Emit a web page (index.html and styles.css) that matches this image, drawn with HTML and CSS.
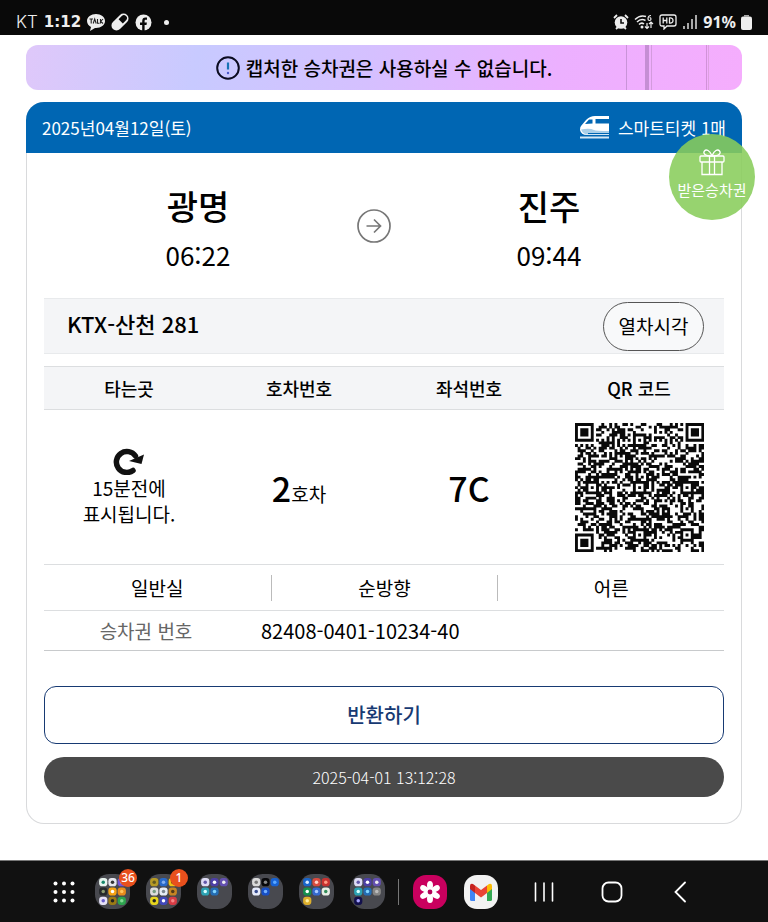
FILE: index.html
```html
<!DOCTYPE html>
<html lang="ko">
<head>
<meta charset="utf-8">
<meta name="viewport" content="width=device-width, initial-scale=1">
<title>승차권</title>
<link rel="stylesheet" href="styles.css">
</head>
<body>
<div class="statusbar">
  <div class="status-group">
    <span class="carrier">KT</span>
    <span class="clock">1:12</span>
    <svg class="talk" width="18" height="17" viewBox="0 0 18 17"><path fill="#eee" d="M9 0C4 0 0 3 0 7c0 3 2 5 4 6l-1 4 5-3h1c5 0 9-3 9-7s-4-7-9-7z"/><path d="M2.500 5h3.500M4.200 5v4.500M6.200 9.500l1.500-4.500 1.500 4.500M10.500 5v4.200h2M13.500 5v4.500M16 5l-2.300 2.500 2.300 2" fill="none" stroke="#222" stroke-width="1.100"/></svg>
    <svg width="18" height="18" viewBox="0 0 18 18"><g transform="rotate(-45 9 9)"><rect x="-1" y="4" width="20" height="10" rx="5" fill="#eee"/><path d="M10 6h4.500a3 3 0 0 1 0 6H10z" fill="#090909"/></g></svg>
    <svg class="fb" width="17" height="17" viewBox="0 0 17 17"><circle cx="8.500" cy="8.500" r="8" fill="#eee"/><path d="M7.200 17v-6H5V8.600h2.200V7c0-2.400 1.300-3.500 3.200-3.500l1.600.1v2.100h-1c-1.100 0-1.400.5-1.400 1.300v1.600h2.300l-.4 2.400H9.600v6z" fill="#090909"/></svg>
    <span class="dot"></span>
  </div>
  <div class="status-group status-right">
    <svg width="16" height="16" viewBox="0 0 16 16"><circle cx="8" cy="8.500" r="6.300" fill="#eee"/><path d="M1 4l3-3M15 4l-3-3M3 15l2-2M13 15l-2-2" stroke="#eee" stroke-width="1.800"/><path d="M8 5v4h3" fill="none" stroke="#111" stroke-width="1.600"/></svg>
    <svg width="20" height="16" viewBox="0 0 20 16"><g fill="none" stroke="#eee" stroke-width="1.500"><path d="M1 5.500Q6 .500 12 2.500M3 8q4-4 8.500-1.500M5 10.500q2.500-2.500 5-.500"/><path d="M17 1.500q-3 0-3 3.500a1.500 1.500 0 1 0 1.500-1.500M13 9v5.500M11 12.500l2 2 2-2M17 14V8.500M15 10l2-2 2 2" stroke-width="1.200"/></g><circle cx="8" cy="13" r="1.500" fill="#eee"/></svg>
    <svg width="18" height="16" viewBox="0 0 18 16"><path d="M3 1h12q2 0 2 2v7q0 2-2 2H8l-3 3v-3H3q-2 0-2-2V3q0-2 2-2z" fill="none" stroke="#eee" stroke-width="1.300"/><path d="M4.200 3.500v6M7.800 3.500v6M4.200 6.500h3.600M10.500 4v5q3.500.400 3.500-2.500T10.500 4z" fill="none" stroke="#eee" stroke-width="1.300"/></svg>
    <svg width="16" height="16" viewBox="0 0 16 16"><path d="M2 12v3M6 9v6M10 5v10M14 1v14" stroke="#ddd" stroke-width="1.500"/></svg>
    <span class="percent">91%</span>
    <svg width="11" height="15" viewBox="0 0 11 15"><path d="M3 0h5v1.500H3z" fill="#aaa"/><rect y="1.500" width="11" height="13.500" rx="2" fill="#eee"/></svg>
  </div>
</div>

<main class="content">
  <div class="notice">
    <svg width="24" height="24" viewBox="0 0 24 24"><circle cx="12" cy="12" r="10.800" fill="none" stroke="#0b0b20" stroke-width="2"/><path d="M12 6.500v7" stroke="#1673b5" stroke-width="2.200"/><circle cx="12" cy="17" r="1.200" fill="#4a59c8"/></svg>
    <span>캡처한 승차권은 사용하실 수 없습니다.</span>
  </div>

  <article class="ticket">
    <header class="ticket-head">
      <span>2025년04월12일(토)</span>
      <span class="smart">
        <svg width="29" height="23" viewBox="0 0 29 23"><path d="M29 0H15Q10 0 6 4L1 10q-1 1-1 4 1 5 7 5h22z" fill="#fff"/><path d="M29 3H15.500v4.500H29zM5 8l4-4.500h3.500v4z" fill="#0066b3"/><path d="M1 13.500q9-1.500 13 .500 2 1 15 1v3.500H8q-5 0-7-5z" fill="#a9cfe8"/><path d="M8 17.500h21" stroke="#0066b3"/><path d="M0 21.500h29" stroke="#d5e8f4" stroke-width="2"/></svg>
        스마트티켓 1매
      </span>
    </header>

    <button class="gift" type="button">
      <svg width="26" height="27" viewBox="0 0 26 27"><g fill="none" stroke="#fff" stroke-width="1.300"><rect x="1" y="7" width="24" height="6" rx="1"/><path d="M3 13v12.500h20V13M10.500 7v18.500M15.500 7v18.500M13 7C5 7 4 4 5.500 2S11 1 13 7zM13 7c8 0 9-3 7.500-5S15 1 13 7z"/></g></svg>
      <span>받은승차권</span>
    </button>

    <div class="ticket-body">
      <div class="route">
        <div class="stop"><strong>광명</strong><time>06:22</time></div>
        <svg class="arrow" width="34" height="34" viewBox="0 0 34 34"><g fill="none" stroke="#777" stroke-width="1.700"><circle cx="17" cy="17" r="16"/><path d="M9.500 17h14M17 10.500l6.500 6.500-6.500 6.500"/></g></svg>
        <div class="stop"><strong>진주</strong><time>09:44</time></div>
      </div>

      <div class="train">
        <h2>KTX-산천 281</h2>
        <button type="button">열차시각</button>
      </div>

      <table class="seat">
        <thead><tr><th>타는곳</th><th>호차번호</th><th>좌석번호</th><th>QR 코드</th></tr></thead>
        <tbody><tr>
          <td class="platform">
            <svg width="32" height="28" viewBox="0 0 32 28"><path d="M20 23.500A10.500 10.500 0 1 1 22.500 9" fill="none" stroke="#111" stroke-width="5.500" stroke-linecap="round"/><path d="M16 14 31 7.500 28.500 17z" fill="#111"/></svg>
            <div>15분전에<br>표시됩니다.</div>
          </td>
          <td class="value"><strong>2</strong>호차</td>
          <td class="value"><strong>7C</strong></td>
          <td><svg class="qr" id="qr" viewBox="0 0 49 49" role="img" aria-label="QR 코드"></svg></td>
        </tr></tbody>
      </table>

      <ul class="options"><li>일반실</li><li>순방향</li><li>어른</li></ul>

      <dl class="number"><dt>승차권 번호</dt><dd>82408-0401-10234-40</dd></dl>

      <button class="refund" type="button">반환하기</button>
      <div class="stamp">2025-04-01 13:12:28</div>
    </div>
  </article>
</main>

<nav class="dock">
  <button class="slot grid-slot" type="button" aria-label="앱">
    <svg width="22" height="22" viewBox="0 0 22 22" fill="#fff"><circle cx="2.500" cy="2.500" r="2"/><circle cx="11" cy="2.500" r="2"/><circle cx="19.500" cy="2.500" r="2"/><circle cx="2.500" cy="11" r="2"/><circle cx="11" cy="11" r="2"/><circle cx="19.500" cy="11" r="2"/><circle cx="2.500" cy="19.500" r="2"/><circle cx="11" cy="19.500" r="2"/><circle cx="19.500" cy="19.500" r="2"/></svg>
  </button>
  <button class="slot folder" type="button" aria-label="폴더 1" data-icons="#e8f4ee/#17876b,#e6e6ee/#333,#7452d8/#aaa,#25282a/#8b9970,#f6a313/#fff,#e78b1c/#ffc35b,#e5e1f5/#685dcb,#9b7a15/#222,#2da44e/#83d994"><span class="badge">36</span></button>
  <button class="slot folder" type="button" aria-label="폴더 2" data-icons="#b69a25/#635a21,#2869c9/#83aff0,#edc316/#5f4c14,#dcdcdc/#759b82,#e8edf5/#7c8792,#c78522/#533a18,#e7d51d/#222,#4148bb/#fff,#d73c45/#f58686"><span class="badge">1</span></button>
  <button class="slot folder" type="button" aria-label="폴더 3" data-icons="#dedcf5/#6258a9,#4d3fa5/#fff,#6350b0/#eee,#2ba2b3/#d8ffff,#246db4/#83d5ff"></button>
  <button class="slot folder" type="button" aria-label="폴더 4" data-icons="#dadada/#777,#08080a/#888,#1762d2/#5ba8ff,#e5eafa/#384d91,#174fc6/#75b1ff"></button>
  <button class="slot folder" type="button" aria-label="폴더 5" data-icons="#1965ca/#d7eaff,#d84b3f/#ffd3ca,#c83230/#ff9b83,#14904e/#fff,#3569cf/#a9cbff,#e8eee5/#348d5a,#deb02d/#fff0a0"></button>
  <button class="slot folder" type="button" aria-label="폴더 6" data-icons="#dedcf5/#6258a9,#4d3fa5/#fff,#6350b0/#eee,#2ba2b3/#d8ffff,#246db4/#83d5ff,#858585/#bbb,#12104c/#a5a4ff"></button>
  <span class="divider"></span>
  <button class="slot" type="button" aria-label="갤러리">
    <svg width="34" height="34" viewBox="0 0 34 34"><rect width="34" height="34" rx="13" fill="#c9005e"/><g fill="#fff"><ellipse cx="17" cy="10.500" rx="3" ry="4.500"/><ellipse cx="17" cy="10.500" rx="3" ry="4.500" transform="rotate(60 17 17)"/><ellipse cx="17" cy="10.500" rx="3" ry="4.500" transform="rotate(120 17 17)"/><ellipse cx="17" cy="10.500" rx="3" ry="4.500" transform="rotate(180 17 17)"/><ellipse cx="17" cy="10.500" rx="3" ry="4.500" transform="rotate(240 17 17)"/><ellipse cx="17" cy="10.500" rx="3" ry="4.500" transform="rotate(300 17 17)"/><circle cx="17" cy="17" r="4"/></g><circle cx="17" cy="17" r="2.400" fill="#b30058"/></svg>
  </button>
  <button class="slot" type="button" aria-label="Gmail">
    <svg width="34" height="34" viewBox="0 0 34 34"><rect width="34" height="34" rx="13" fill="#f2f2f2"/><path d="M6 11l5 4v11H7.500Q6 26 6 24.500z" fill="#4285f4"/><path d="M28 11l-5 4v11h3.500q1.500 0 1.500-1.500z" fill="#34a853"/><path d="M23 10.500 25 9q3-1 3 2v3l-5 4z" fill="#fbbc04"/><path d="M6 14v-3q0-3 3-2l2 1.500V18z" fill="#c5221f"/><path d="M11 10.500l6 4.500 6-4.500V18l-6 4.500-6-4.500z" fill="#ea4335"/></svg>
  </button>
  <div class="keys">
    <button class="slot key" type="button" aria-label="최근 앱"><svg width="20" height="20" viewBox="0 0 20 20"><path d="M1.500 1v18M10 1v18M18.500 1v18" stroke="#fff" stroke-width="1.600" stroke-linecap="round"/></svg></button>
    <button class="slot key" type="button" aria-label="홈"><svg width="22" height="22" viewBox="0 0 22 22"><rect x="1.500" y="1.500" width="19" height="19" rx="6" fill="none" stroke="#fff" stroke-width="1.800"/></svg></button>
    <button class="slot key" type="button" aria-label="뒤로"><svg width="12" height="22" viewBox="0 0 12 22"><path d="M11 1.500 1.500 11l9.500 9.500" fill="none" stroke="#fff" stroke-width="1.800" stroke-linecap="round"/></svg></button>
  </div>
</nav>
<script src="script.js"></script>
</body>
</html>
```
FILE: styles.css
```css
* { box-sizing: border-box; }
body {
  margin: 0;
  min-height: 100vh;
  display: flex;
  flex-direction: column;
  background: #fff;
  color: #000;
  font-family: "Noto Sans CJK KR", "Noto Sans", sans-serif;
  font-size: 19px;
  line-height: 26px;
}
button { font: inherit; color: inherit; padding: 0; cursor: pointer; }
svg { display: block; flex: none; }

.statusbar {
  flex: none;
  height: 35px;
  padding: 9px 16px 0;
  display: flex;
  justify-content: space-between;
  background: #090909;
  color: #eee;
  font-family: Inter, sans-serif;
  font-size: 17px;
}
.status-group { display: flex; align-items: center; gap: 6px; }
.status-right { gap: 5px; }
.carrier { font-weight: 300; }
.clock { font-family: "DejaVu Sans", sans-serif; font-weight: 700; font-size: 15px; }
.percent { font-family: "Noto Sans", sans-serif; font-size: 16px; font-weight: 700; }
.dot { width: 5px; height: 5px; margin-left: 6px; border-radius: 50%; background: #eee; }

.content { flex: 1; padding: 10px 26px 36px; }
.notice {
  height: 45px;
  display: flex;
  align-items: center;
  justify-content: center;
  gap: 6px;
  border-radius: 12px;
  background:
    linear-gradient(#c994d8, #c994d8) 600px 0 / 1px 100% no-repeat,
    linear-gradient(#c58ed4, #c58ed4) 619px 0 / 4px 100% no-repeat,
    linear-gradient(#d39bdd, #d39bdd) 625px 0 / 1px 100% no-repeat,
    linear-gradient(#d192d8, #d192d8) 680px 0 / 1px 100% no-repeat,
    linear-gradient(#dda0e0, #dda0e0) 682px 0 / 1px 100% no-repeat,
    linear-gradient(100deg, #dfc8fa 0%, #c8caff 24%, #d5c0ff 48%, #ecb0ff 74%, #f5adfd 100%);
  font-weight: 500;
}

.ticket {
  position: relative;
  margin-top: 12px;
  border: 1px solid #d9dadc;
  border-top: 0;
  border-radius: 18px;
}
.ticket-head {
  height: 51px;
  margin: 0 -1px;
  padding: 0 16px;
  display: flex;
  align-items: center;
  justify-content: space-between;
  border-radius: 18px 18px 0 0;
  background: #0066b3;
  color: #fff;
  font-size: 17px;
}
.smart { display: flex; align-items: center; gap: 9px; }
.gift {
  position: absolute;
  top: 32px;
  right: -14px;
  width: 86px;
  height: 86px;
  display: flex;
  flex-direction: column;
  align-items: center;
  gap: 1px;
  padding-top: 15px;
  border: 0;
  border-radius: 50%;
  background: rgba(137, 205, 91, 0.88);
  color: #fff;
  font-size: 15px;
}
.ticket-body { padding: 0 17px 26px; }

.route {
  height: 145px;
  padding-right: 21px;
  display: grid;
  grid-template-columns: 1fr 43px 1fr;
  align-items: center;
  justify-items: center;
}
.stop { display: flex; flex-direction: column; align-items: center; gap: 6px; padding-top: 5px; }
.stop strong { font-size: 34px; font-weight: 500; line-height: 48px; }
.stop time { font-size: 26px; line-height: 38px; }

.train {
  height: 56px;
  padding: 0 20px 0 23px;
  display: flex;
  align-items: center;
  justify-content: space-between;
  border: solid #e8eaec;
  border-width: 1px 0;
  background: #f4f5f7;
}
.train h2 { margin: 0; padding-bottom: 6px; font-size: 22px; font-weight: 500; }
.train button {
  width: 101px;
  height: 49px;
  border: 1px solid #555;
  border-radius: 25px;
  background: #f8f9fa;
}

.seat { width: 100%; margin-top: 12px; border-collapse: collapse; table-layout: fixed; text-align: center; }
.seat th {
  height: 43px;
  padding: 0;
  border: solid #dcdee0;
  border-width: 1px 0;
  background: #f4f5f7;
  font-size: 18px;
  font-weight: 500;
}
.seat td { height: 155px; padding: 0; border-bottom: 1px solid #dcdee0; }
.seat strong { font-size: 34px; font-weight: 500; }
.seat .value { padding-top: 8px; }
.platform svg { margin: 0 auto; }
.qr { width: 129px; height: 129px; margin: 0 auto; }

.options { margin: 0; padding: 0; display: grid; grid-template-columns: repeat(3, 1fr); align-items: center; height: 46px; border-bottom: 1px solid #dcdee0; list-style: none; text-align: center; }
.options li + li { border-left: 1px solid #bbb; }
.number { margin: 0; height: 40px; display: grid; grid-template-columns: 3fr 7fr; align-items: center; border-bottom: 1px solid #c8cacc; }
.number dt { color: #666; text-align: center; }
.number dd { margin: 0; padding-left: 13px; font-size: 20px; }

.refund {
  width: 100%;
  height: 58px;
  margin-top: 35px;
  display: block;
  border: 1px solid #173a73;
  border-radius: 12px;
  background: #fff;
  color: #173a73;
  font-size: 20px;
  font-weight: 500;
}
.stamp {
  margin-top: 13px;
  padding: 7px;
  border-radius: 20px;
  background: #4a4a4a;
  color: #fff;
  text-align: center;
  font-size: 16px;
  font-weight: 300;
}

.dock {
  flex: none;
  height: 62px;
  padding-right: 13px;
  display: flex;
  align-items: center;
  justify-content: center;
  border-top: 1px solid #777;
  background: #111;
}
.slot { position: relative; width: 51px; height: 44px; display: flex; align-items: center; justify-content: center; border: 0; background: none; }
.grid-slot { width: 46px; }
.keys { display: flex; margin-left: 4px; }
.key { width: 68px; }
.divider { width: 1px; height: 26px; margin: 0 5px; background: #777; }
.badge {
  position: absolute;
  top: -1px;
  right: 1px;
  min-width: 18px;
  height: 18px;
  padding: 0 2px;
  border-radius: 9px;
  background: #e8501d;
  color: #fff;
  font: 500 12px/18px "Noto Sans", sans-serif;
}
```
FILE: script.js
```js
const NS = "http://www.w3.org/2000/svg";

function add(parent, name, attrs) {
  const node = document.createElementNS(NS, name);
  for (const key in attrs) node.setAttribute(key, attrs[key]);
  parent.appendChild(node);
  return node;
}

// Folder icons: a rounded tile with up to nine small apps
document.querySelectorAll(".folder").forEach((folder) => {
  const svg = document.createElementNS(NS, "svg");
  svg.setAttribute("width", 35);
  svg.setAttribute("height", 35);
  svg.setAttribute("viewBox", "0 0 34 34");
  add(svg, "rect", { width: 34, height: 34, rx: 14, fill: "#48494f" });
  folder.dataset.icons.split(",").forEach((pair, i) => {
    const [back, front] = pair.split("/");
    const x = 8 + (i % 3) * 9;
    const y = 8 + Math.floor(i / 3) * 9;
    add(svg, "rect", { x: x - 4, y: y - 4, width: 8, height: 8, rx: 3, fill: back });
    add(svg, "circle", { cx: x, cy: y, r: 1.7, fill: front });
  });
  folder.prepend(svg);
});

// QR symbol of 49 x 49 modules
const SIZE = 49;
const finders = [[0, 0], [SIZE - 7, 0], [0, SIZE - 7]];
const aligns = [[24, 6], [6, 24], [24, 24], [42, 24], [24, 42], [42, 42]];
let seed = 82408;
function dark(x, y) {
  seed = (Math.imul(seed, 1664525) + 1013904223) >>> 0;
  for (const [fx, fy] of finders) {
    const d = Math.max(Math.abs(x - fx - 3), Math.abs(y - fy - 3));
    if (d <= 4) return d === 3 || d <= 1;
  }
  for (const [ax, ay] of aligns) {
    const d = Math.max(Math.abs(x - ax), Math.abs(y - ay));
    if (d <= 2) return d !== 1;
  }
  if (x === 6) return y % 2 === 0;
  if (y === 6) return x % 2 === 0;
  return seed / 4294967296 < 0.52;
}
let path = "";
for (let y = 0; y < SIZE; y++) {
  for (let x = 0; x < SIZE; x++) {
    if (dark(x, y)) path += `M${x} ${y}h1.1v1.1h-1.1z`;
  }
}
add(document.getElementById("qr"), "path", { d: path, fill: "#0a0a0a" });
```
